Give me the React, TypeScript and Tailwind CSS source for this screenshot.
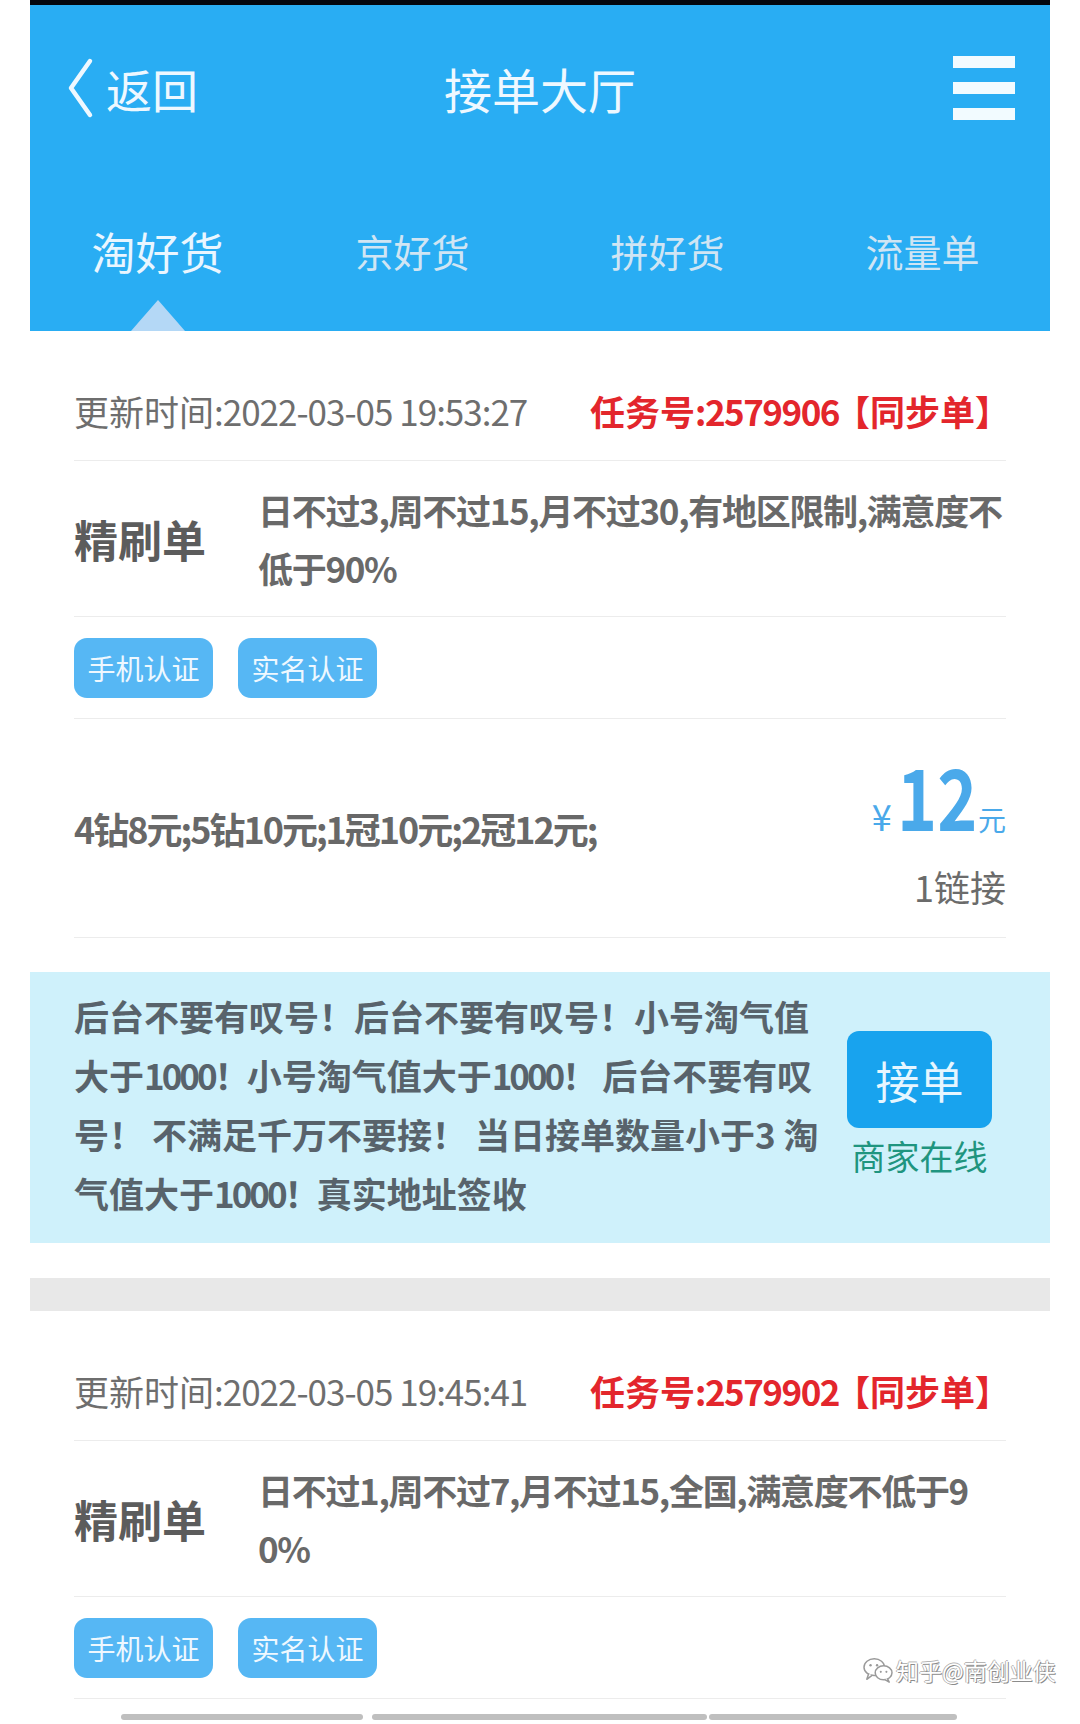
import React from "react";

function TimeRow({ time, id }: { time: string; id: string }) {
  return (
    <div className="h-[130px] pt-[31px] flex items-center border-b border-[#ececec]">
      <div className="w-[516px] shrink-0 whitespace-nowrap leading-[44px] text-[#6e6e6e] text-[35px]">
        <span>更新时间</span>
        <span className="tracking-[-1px]">:{time}</span>
      </div>
      <div className="whitespace-nowrap leading-[44px] font-bold text-[#e3262c] text-[35px]">
        <span>任务号</span>
        <span className="tracking-[-1.5px]">:{id}</span>
        <span className="ml-[-4px]">【同步单】</span>
      </div>
    </div>
  );
}

function DescRow({ l1, l2 }: { l1: string; l2: string }) {
  return (
    <div className="h-[156px] flex items-center border-b border-[#ececec]">
      <div className="w-[184px] shrink-0 text-[44px] font-bold leading-none text-[#5c5c5c]">
        精刷单
      </div>
      <div className="text-[35px] font-bold leading-[58px] tracking-[-1.3px] text-[#696969] whitespace-nowrap">
        {l1}
        <br />
        {l2}
      </div>
    </div>
  );
}

function Tag({ children }: { children: React.ReactNode }) {
  return (
    <div className="w-[139px] h-[60px] rounded-[13px] bg-[#56b7f4] flex items-center justify-center text-[28px] leading-none text-[#eef8ff]">
      {children}
    </div>
  );
}

function TagRow() {
  return (
    <div className="h-[102px] flex items-center gap-[25px] border-b border-[#ececec]">
      <Tag>手机认证</Tag>
      <Tag>实名认证</Tag>
    </div>
  );
}

function N({ children }: { children: React.ReactNode }) {
  return <span className="tracking-[-3px]">{children}</span>;
}

function WeChatIcon() {
  return (
    <svg width="32" height="28" viewBox="0 0 34 30">
      <ellipse cx="13" cy="12" rx="11" ry="9" fill="#fff" stroke="#9a9a9a" strokeWidth="1.6" />
      <path d="M7 19 L5 25 L11 20.5" fill="#fff" stroke="#9a9a9a" strokeWidth="1.6" strokeLinejoin="round" />
      <ellipse cx="23" cy="18" rx="9" ry="7.5" fill="#fff" stroke="#9a9a9a" strokeWidth="1.6" />
      <path d="M27 24 L29 28 L24 25" fill="#fff" stroke="#9a9a9a" strokeWidth="1.6" strokeLinejoin="round" />
      <circle cx="9" cy="10" r="1.3" fill="#9a9a9a" />
      <circle cx="16" cy="10" r="1.3" fill="#9a9a9a" />
      <circle cx="20" cy="17" r="1.1" fill="#9a9a9a" />
      <circle cx="26" cy="17" r="1.1" fill="#9a9a9a" />
    </svg>
  );
}

export default function App() {
  const tabs = ["淘好货", "京好货", "拼好货", "流量单"];
  return (
    <div className="w-[1080px] h-[1724px] bg-white relative overflow-hidden [font-family:'Noto_Sans_CJK_SC',sans-serif]">
      <div className="ml-[30px] w-[1020px] flex flex-col">
        <div className="h-[5px] bg-[#03070f]" />
        <header className="bg-[#29adf3]">
          <div className="h-[166px] grid grid-cols-[1fr_auto_1fr] items-center px-[35px]">
            <div className="flex items-center gap-[11px]">
              <svg width="30" height="62" viewBox="0 0 30 62">
                <polyline
                  points="25,4 6,31 25,58"
                  fill="none"
                  stroke="#eef8ff"
                  strokeWidth="4.5"
                  strokeLinecap="round"
                  strokeLinejoin="round"
                />
              </svg>
              <span className="text-[46px] leading-none text-[#eef8ff]">返回</span>
            </div>
            <div className="text-[48px] leading-none text-[#eef8ff]">接单大厅</div>
            <div className="flex flex-col items-end gap-[14px]">
              <div className="w-[62px] h-[12px] bg-[#f2fbff]" />
              <div className="w-[62px] h-[12px] bg-[#f2fbff]" />
              <div className="w-[62px] h-[12px] bg-[#f2fbff]" />
            </div>
          </div>
          <div className="h-[160px] grid grid-cols-4">
            {tabs.map((t, i) => (
              <div key={t} className="relative flex items-center justify-center">
                <span
                  className={
                    i === 0
                      ? "text-[44px] leading-none text-[#e9f6ff]"
                      : "text-[38px] leading-none text-[#d0e5f3]"
                  }
                >
                  {t}
                </span>
                {i === 0 && (
                  <div className="absolute bottom-0 left-1/2 -translate-x-1/2 w-0 h-0 border-l-[27px] border-r-[27px] border-b-[31px] border-l-transparent border-r-transparent border-b-[#b4d8f6]" />
                )}
              </div>
            ))}
          </div>
        </header>

        <div className="px-[44px]">
          <TimeRow time="2022-03-05 19:53:27" id="2579906" />
          <DescRow l1="日不过3,周不过15,月不过30,有地区限制,满意度不" l2="低于90%" />
          <TagRow />
          <div className="h-[219px] flex items-center justify-between border-b border-[#ececec]">
            <div className="text-[36px] font-bold tracking-[-2px] text-[#686868] whitespace-nowrap">
              4钻8元;5钻10元;1冠10元;2冠12元;
            </div>
            <div className="flex flex-col items-end">
              <div className="flex items-baseline leading-none text-[#4aa9ea]">
                <span className="text-[36px] mr-[4px]">¥</span>
                <span className="inline-block text-[85px] font-bold scale-x-[0.8] mx-[-9px]">12</span>
                <span className="text-[28px]">元</span>
              </div>
              <div className="mt-[30px] text-[36px] leading-[40px] text-[#6b6b6b]">1链接</div>
            </div>
          </div>
        </div>

        <div className="h-[34px]" />

        <div className="h-[271px] bg-[#cff1fb] flex items-center justify-between pl-[44px] pr-[58px]">
          <div className="mb-[8px] text-[35px] font-bold leading-[59px] text-[#58636b] whitespace-nowrap">
            后台不要有叹号！后台不要有叹号！小号淘气值
            <br />
            大于<N>1000！</N>小号淘气值大于<N>1000！</N> 后台不要有叹
            <br />
            号！ 不满足千万不要接！ 当日接单数量小于3 淘
            <br />
            气值大于<N>1000！</N>真实地址签收
          </div>
          <div className="flex flex-col items-center w-[145px] mb-[8px]">
            <div className="w-[145px] h-[97px] rounded-[12px] bg-[#18a3ee] flex items-center justify-center text-[44px] leading-none text-[#e6f6ff]">
              接单
            </div>
            <div className="mt-[8px] text-[34px] leading-[40px] text-[#1f957f] whitespace-nowrap">
              商家在线
            </div>
          </div>
        </div>

        <div className="h-[35px]" />
        <div className="h-[33px] bg-[#e8e8e8]" />

        <div className="px-[44px]">
          <TimeRow time="2022-03-05 19:45:41" id="2579902" />
          <DescRow l1="日不过1,周不过7,月不过15,全国,满意度不低于9" l2="0%" />
          <TagRow />
        </div>

        <div className="mt-[15px] flex pl-[91px]">
          <div className="w-[242px] h-[6px] rounded-full bg-[#bfbfbf]" />
          <div className="ml-[9px] w-[335px] h-[6px] rounded-full bg-[#bfbfbf]" />
          <div className="ml-[2px] w-[248px] h-[6px] rounded-full bg-[#bfbfbf]" />
        </div>
      </div>

      <div className="absolute left-[862px] top-[1656px] flex items-center gap-[2px]">
        <WeChatIcon />
        <span className="text-[23px] leading-none text-white [text-shadow:1px_1px_0_#8c8c8c,-1px_0_0_#b5b5b5,0_-1px_0_#b5b5b5]">
          知乎@南创业侠
        </span>
      </div>
    </div>
  );
}
